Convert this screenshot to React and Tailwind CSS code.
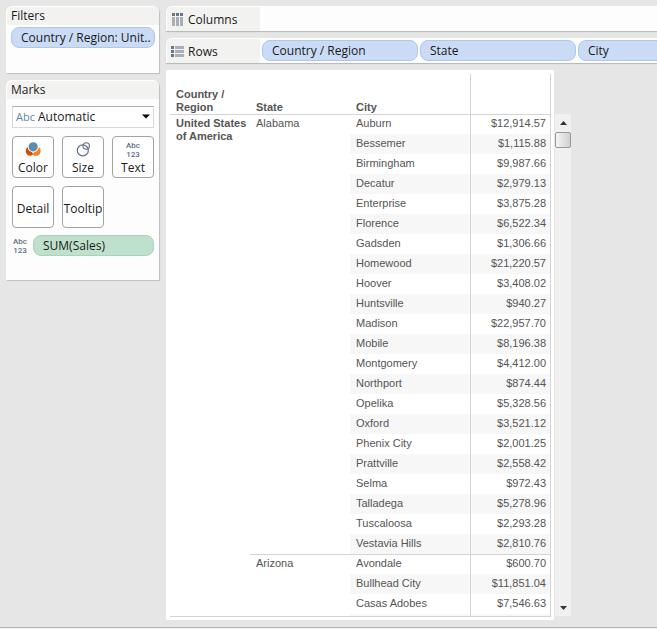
import { useState } from 'react';

const states = [
  {
    name: 'Alabama',
    cities: [
      ['Auburn', '$12,914.57'],
      ['Bessemer', '$1,115.88'],
      ['Birmingham', '$9,987.66'],
      ['Decatur', '$2,979.13'],
      ['Enterprise', '$3,875.28'],
      ['Florence', '$6,522.34'],
      ['Gadsden', '$1,306.66'],
      ['Homewood', '$21,220.57'],
      ['Hoover', '$3,408.02'],
      ['Huntsville', '$940.27'],
      ['Madison', '$22,957.70'],
      ['Mobile', '$8,196.38'],
      ['Montgomery', '$4,412.00'],
      ['Northport', '$874.44'],
      ['Opelika', '$5,328.56'],
      ['Oxford', '$3,521.12'],
      ['Phenix City', '$2,001.25'],
      ['Prattville', '$2,558.42'],
      ['Selma', '$972.43'],
      ['Talladega', '$5,278.96'],
      ['Tuscaloosa', '$2,293.28'],
      ['Vestavia Hills', '$2,810.76'],
    ],
  },
  {
    name: 'Arizona',
    cities: [
      ['Avondale', '$600.70'],
      ['Bullhead City', '$11,851.04'],
      ['Casas Adobes', '$7,546.63'],
    ],
  },
];

const rows = states.flatMap((state) =>
  state.cities.map(([city, sales], index) => ({
    city,
    sales,
    first: index === 0,
    state: state.name,
    span: state.cities.length,
  }))
);

function ColumnsIcon() {
  return (
    <svg width="12" height="14" viewBox="0 0 12 14" shapeRendering="crispEdges">
      {[1, 5, 9].map((x) => (
        <g key={x}>
          <rect x={x} y="0" width="3" height="3" fill="#66758a" />
          <rect x={x} y="4" width="3" height="9" fill="#a9afb8" />
        </g>
      ))}
    </svg>
  );
}

function RowsIcon() {
  return (
    <svg width="13" height="12" viewBox="0 0 13 12" shapeRendering="crispEdges">
      {[0, 4, 8].map((y) => (
        <g key={y}>
          <rect x="0" y={y} width="3" height="3" fill="#66758a" />
          <rect x="4" y={y} width="9" height="3" fill="#a9afb8" />
        </g>
      ))}
    </svg>
  );
}

function ColorIcon() {
  return (
    <svg width="16" height="16" viewBox="0 0 16 16">
      <path d="M2 5.6 C0.2 7.6 0.4 11.4 2.6 13 C4.6 14.4 7.2 13.8 8.2 12 L6.6 9.6 C4.4 9 3 7.6 2.8 5.4 Z" fill="#cf4f0c" />
      <path d="M14.4 5.6 C16.2 7.6 16 11.4 13.8 13 C11.6 14.4 8.6 14 7.4 12.6 L9.6 9.8 C12 9.2 13.4 7.6 13.6 5.4 Z" fill="#f5802a" />
      <circle cx="8.2" cy="4.8" r="5.3" fill="#fff" />
      <circle cx="8.2" cy="4.8" r="4.6" fill="#5b8db3" />
    </svg>
  );
}

function SizeIcon() {
  return (
    <svg width="16" height="16" viewBox="0 0 16 16" fill="none" stroke="#5f6f88">
      <circle cx="7.8" cy="8.4" r="5.5" strokeWidth="1.2" />
      <circle cx="11.2" cy="4" r="3.2" strokeWidth="1.1" />
    </svg>
  );
}

function TextIcon() {
  return (
    <span className="flex w-4 flex-col items-center font-[Roboto,sans-serif] text-[8px] leading-[9px] font-medium text-[#5d6b82]">
      <span>Abc</span>
      <span>123</span>
    </span>
  );
}

function Card({ id, title, children }) {
  return (
    <section
      aria-labelledby={id}
      className="rounded-t-md border-t border-l border-white bg-[#fdfdfd] shadow-[1px_1px_1px_#bdbdbd]"
    >
      <h2 id={id} className="h-[18px] rounded-t-md bg-[#f2f2f0] px-1 text-xs leading-[18px]">
        {title}
      </h2>
      {children}
    </section>
  );
}

function Pill({ className, children }) {
  return (
    <button
      type="button"
      className={`h-[21px] rounded-lg border px-[9px] text-left text-xs leading-[19px] whitespace-nowrap ${className}`}
    >
      {children}
    </button>
  );
}

function MarkButton({ label, icon }) {
  return (
    <button
      type="button"
      className="flex size-[42px] flex-col items-center justify-center gap-0.5 rounded border border-[#a3a3a3] bg-white pt-1 text-xs leading-4"
    >
      {icon && <span className="flex h-4 items-center">{icon}</span>}
      <span>{label}</span>
    </button>
  );
}

function Shelf({ label, icon, children }) {
  return (
    <div className="flex h-[25px] overflow-hidden rounded-tl-md border-t border-l border-white bg-[#fdfdfd] shadow-[0_1px_1px_#b5b5b5]">
      <div className="flex w-[93px] shrink-0 items-center bg-[#f2f2f0] pt-0.5 pl-1 text-xs">
        <span className="w-[17px]">{icon}</span>
        <span>{label}</span>
      </div>
      <div className="flex items-start gap-0.5 pt-px pl-0.5">{children}</div>
    </div>
  );
}

function Scrollbar() {
  return (
    <div className="mt-11 mb-1 ml-px flex w-4 flex-col bg-[#f0f0f0]">
      <button type="button" aria-label="Scroll up" className="flex h-[18px] items-center justify-center">
        <svg width="7" height="4" viewBox="0 0 7 4">
          <path d="M3.5 0 L7 4 H0 Z" fill="#333" />
        </svg>
      </button>
      <div className="h-4 rounded-xs border border-[#989898] bg-linear-to-r from-[#f6f6f6] to-[#cfcfd1]" />
      <button
        type="button"
        aria-label="Scroll down"
        className="mt-auto flex h-4 items-center justify-center"
      >
        <svg width="7" height="4" viewBox="0 0 7 4">
          <path d="M0 0 H7 L3.5 4 Z" fill="#333" />
        </svg>
      </button>
    </div>
  );
}

function SalesTable() {
  return (
    <table className="w-full table-fixed border-separate border-spacing-0 border-b border-[#d4d4d4] text-left font-['Liberation_Sans',Arial,sans-serif] text-[11px] leading-[13px] text-[#555]">
      <colgroup>
        <col className="w-20" />
        <col className="w-[100px]" />
        <col className="w-[120px]" />
        <col />
      </colgroup>
      <thead>
        <tr className="h-10 align-bottom">
          <th className="px-1.5">Country / Region</th>
          <th className="px-1.5">State</th>
          <th className="px-1.5">City</th>
          <td className="border-x border-[#d4d4d4]" />
        </tr>
      </thead>
      <tbody>
        {rows.map((row, index) => {
          const line = row.first ? 'border-t' : '';
          const band = index % 2 === 1 ? 'bg-[#f7f7f7]' : '';
          return (
            <tr key={row.city} className="h-5">
              {index === 0 && (
                <th
                  rowSpan={rows.length + 1}
                  className="border-t border-[#d4d4d4] pt-0.5 pl-1.5 align-top whitespace-nowrap"
                >
                  United States
                  <br />
                  of America
                </th>
              )}
              {row.first && (
                <td rowSpan={row.span} className="border-t border-[#d4d4d4] px-1.5 pt-0.5 align-top">
                  {row.state}
                </td>
              )}
              <td className={`border-[#d4d4d4] px-1.5 pb-0.5 ${line} ${band}`}>{row.city}</td>
              <td className={`border-x border-[#d4d4d4] pr-1 pb-0.5 text-right ${line} ${band}`}>
                {row.sales}
              </td>
            </tr>
          );
        })}
        {/* top edge of the next row, cut off by the viewport */}
        <tr className="h-0.5">
          <td />
          <td className="bg-[#f7f7f7]" />
          <td className="border-x border-[#d4d4d4] bg-[#f7f7f7]" />
        </tr>
      </tbody>
    </table>
  );
}

export default function App() {
  const [markType, setMarkType] = useState('Automatic');

  return (
    <div className="flex min-h-screen flex-col overflow-hidden bg-[#e6e6e6] font-['Open_Sans','Noto_Sans',sans-serif] text-[#1a1a1a]">
      <div className="flex flex-1 gap-[7px] pt-1.5 pl-1.5">
        <aside className="flex w-[153px] shrink-0 flex-col gap-[7px]">
          <Card id="filters-title" title="Filters">
            <div className="flex h-12 items-start px-1 pt-0.5">
              <Pill className="w-full border-[#afc8ea] bg-[#c9dbf5] text-[#1a1a1a]">
                Country / Region: Unit..
              </Pill>
            </div>
          </Card>

          <Card id="marks-title" title="Marks">
            <div className="px-[5px] pt-[7px] pb-6">
              <div className="relative h-[22px]">
                <span className="pointer-events-none absolute top-0 left-1 text-[11px] leading-[21px] font-medium text-[#5b87a8]">
                  Abc
                </span>
                <select
                  aria-labelledby="marks-title"
                  value={markType}
                  onChange={(e) => setMarkType(e.target.value)}
                  className="block h-full w-full appearance-none border border-[#d5d8e0] border-t-[#abadb3] bg-white pl-[25px] text-xs leading-5"
                >
                  <option>Automatic</option>
                </select>
                <svg
                  className="pointer-events-none absolute top-2 right-1"
                  width="8"
                  height="5"
                  viewBox="0 0 8 5"
                >
                  <path d="M0 0.5 H8 L4 4.5 Z" fill="#000" />
                </svg>
              </div>
              <div className="mt-2 grid grid-cols-[repeat(3,42px)] gap-2">
                <MarkButton label="Color" icon={<ColorIcon />} />
                <MarkButton label="Size" icon={<SizeIcon />} />
                <MarkButton label="Text" icon={<TextIcon />} />
                <MarkButton label="Detail" />
                <MarkButton label="Tooltip" />
              </div>
              <div className="mt-[7px] flex items-center gap-[5px]">
                <TextIcon />
                <Pill className="flex-1 border-[#a9d3ba] bg-[#bfe0cc]">SUM(Sales)</Pill>
              </div>
            </div>
          </Card>
        </aside>

        <main className="flex min-w-0 flex-1 flex-col gap-[7px]">
          <Shelf label="Columns" icon={<ColumnsIcon />} />
          <Shelf label="Rows" icon={<RowsIcon />}>
            <Pill className="w-[156px] shrink-0 border-[#afc8ea] bg-[#c9dbf5]">Country / Region</Pill>
            <Pill className="w-[156px] shrink-0 border-[#afc8ea] bg-[#c9dbf5]">State</Pill>
            <Pill className="w-[156px] shrink-0 border-[#afc8ea] bg-[#c9dbf5]">City</Pill>
          </Shelf>

          <div className="flex">
            <div className="w-[388px] bg-white pt-1 pr-[3px] pb-[3px] pl-1">
              <SalesTable />
            </div>
            <Scrollbar />
          </div>
        </main>
      </div>
      <footer className="mt-[7px] h-0.5 border-t border-[#b5b5b5] bg-[#f0f0f0]" />
    </div>
  );
}
